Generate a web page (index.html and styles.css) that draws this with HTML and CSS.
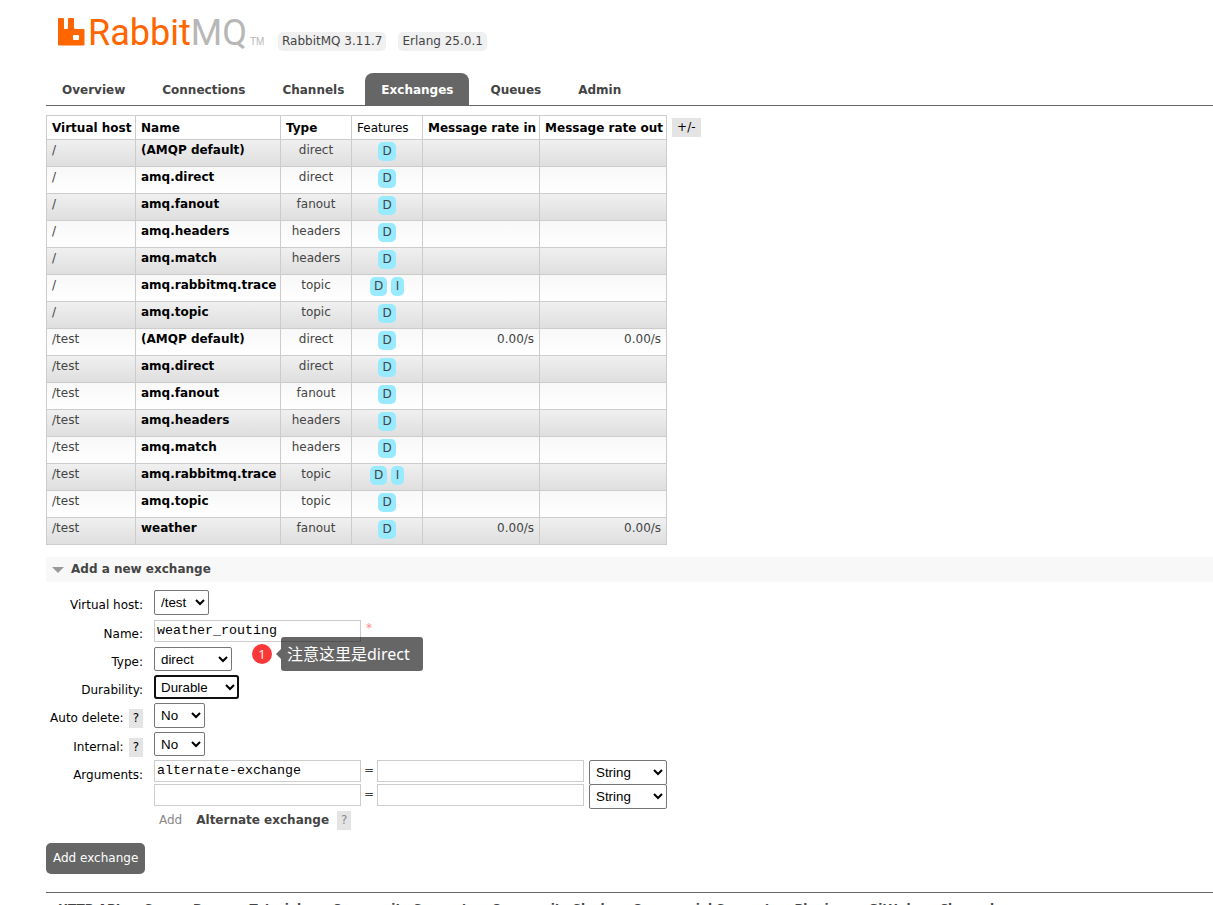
FILE: index.html
```html
<!DOCTYPE html>
<html lang="en">
<head>
<meta charset="utf-8">
<title>RabbitMQ Management</title>
<link rel="stylesheet" href="styles.css">
</head>
<body>
<header class="top">
  <a class="logo" href="#" aria-label="RabbitMQ">
    <svg class="logo-mark" viewBox="0 0 27 28" aria-hidden="true"><path fill="#f60" fill-rule="evenodd" d="M1 0h4q1 0 1 1v9q0 1 1 1h2q1 0 1-1V1q0-1 1-1H15q1 0 1 1v9q0 1 1 1h8.500q1 0 1 1v14.500q0 1-1 1H1q-1 0-1-1V1q0-1 1-1zM16 17q-1 0-1 1v3q0 1 1 1h4q1 0 1-1v-3q0-1-1-1z"/></svg>
    <span class="logo-text">Rabbit<span class="logo-mq">MQ</span></span>
    <span class="logo-tm">TM</span>
  </a>
  <span class="version">RabbitMQ 3.11.7</span>
  <span class="version">Erlang 25.0.1</span>
</header>
<nav>
  <ul class="tabs">
    <li><a href="#">Overview</a></li>
    <li><a href="#">Connections</a></li>
    <li><a href="#">Channels</a></li>
    <li><a class="selected" href="#">Exchanges</a></li>
    <li><a href="#">Queues</a></li>
    <li><a href="#">Admin</a></li>
  </ul>
</nav>
<main>
  <div class="list-area">
    <table class="list">
      <thead>
        <tr><th class="c-vhost">Virtual host</th><th class="c-name">Name</th><th class="c-type">Type</th><th class="c-feat plain">Features</th><th class="c-in">Message rate in</th><th class="c-out">Message rate out</th></tr>
      </thead>
      <tbody>
        <tr><td>/</td><td><a href="#">(AMQP default)</a></td><td class="c">direct</td><td class="c"><abbr>D</abbr></td><td class="r"></td><td class="r"></td></tr>
        <tr><td>/</td><td><a href="#">amq.direct</a></td><td class="c">direct</td><td class="c"><abbr>D</abbr></td><td class="r"></td><td class="r"></td></tr>
        <tr><td>/</td><td><a href="#">amq.fanout</a></td><td class="c">fanout</td><td class="c"><abbr>D</abbr></td><td class="r"></td><td class="r"></td></tr>
        <tr><td>/</td><td><a href="#">amq.headers</a></td><td class="c">headers</td><td class="c"><abbr>D</abbr></td><td class="r"></td><td class="r"></td></tr>
        <tr><td>/</td><td><a href="#">amq.match</a></td><td class="c">headers</td><td class="c"><abbr>D</abbr></td><td class="r"></td><td class="r"></td></tr>
        <tr><td>/</td><td><a href="#">amq.rabbitmq.trace</a></td><td class="c">topic</td><td class="c"><abbr>D</abbr> <abbr>I</abbr></td><td class="r"></td><td class="r"></td></tr>
        <tr><td>/</td><td><a href="#">amq.topic</a></td><td class="c">topic</td><td class="c"><abbr>D</abbr></td><td class="r"></td><td class="r"></td></tr>
        <tr><td>/test</td><td><a href="#">(AMQP default)</a></td><td class="c">direct</td><td class="c"><abbr>D</abbr></td><td class="r">0.00/s</td><td class="r">0.00/s</td></tr>
        <tr><td>/test</td><td><a href="#">amq.direct</a></td><td class="c">direct</td><td class="c"><abbr>D</abbr></td><td class="r"></td><td class="r"></td></tr>
        <tr><td>/test</td><td><a href="#">amq.fanout</a></td><td class="c">fanout</td><td class="c"><abbr>D</abbr></td><td class="r"></td><td class="r"></td></tr>
        <tr><td>/test</td><td><a href="#">amq.headers</a></td><td class="c">headers</td><td class="c"><abbr>D</abbr></td><td class="r"></td><td class="r"></td></tr>
        <tr><td>/test</td><td><a href="#">amq.match</a></td><td class="c">headers</td><td class="c"><abbr>D</abbr></td><td class="r"></td><td class="r"></td></tr>
        <tr><td>/test</td><td><a href="#">amq.rabbitmq.trace</a></td><td class="c">topic</td><td class="c"><abbr>D</abbr> <abbr>I</abbr></td><td class="r"></td><td class="r"></td></tr>
        <tr><td>/test</td><td><a href="#">amq.topic</a></td><td class="c">topic</td><td class="c"><abbr>D</abbr></td><td class="r"></td><td class="r"></td></tr>
        <tr><td>/test</td><td><a href="#">weather</a></td><td class="c">fanout</td><td class="c"><abbr>D</abbr></td><td class="r">0.00/s</td><td class="r">0.00/s</td></tr>
      </tbody>
    </table>
    <button class="chip columns" type="button">+/-</button>
  </div>

  <h2 class="section"><svg class="arrow" viewBox="0 0 12 6" aria-hidden="true"><path fill="#999" d="M0 0h12L6 6z"/></svg>Add a new exchange</h2>

  <form class="add">
    <div class="row tall"><div class="label"><label for="vhost">Virtual host:</label></div>
      <select id="vhost" class="w-vhost"><option>/test</option></select></div>
    <div class="row"><div class="label"><label for="name">Name:</label></div>
      <div class="field"><input id="name" type="text" value="weather_routing"><span class="mand">*</span></div></div>
    <div class="row"><div class="label"><label for="type">Type:</label></div>
      <div class="field noted"><select id="type" class="w-type"><option>direct</option></select>
        <div class="note"><span class="note-num">1</span><span class="note-text">注意这里是direct</span></div></div></div>
    <div class="row"><div class="label"><label for="durable">Durability:</label></div>
      <select id="durable" class="w-durable focused"><option>Durable</option></select></div>
    <div class="row tall"><div class="label"><label for="autodel">Auto delete:</label><button class="chip" type="button">?</button></div>
      <select id="autodel" class="w-no"><option>No</option></select></div>
    <div class="row"><div class="label"><label for="internal">Internal:</label><button class="chip" type="button">?</button></div>
      <select id="internal" class="w-no"><option>No</option></select></div>
    <div class="row"><div class="label"><label for="arg1">Arguments:</label></div>
      <div class="args">
        <div class="arg"><input id="arg1" type="text" value="alternate-exchange"><span class="eq">=</span><input type="text" aria-label="Argument value 1"><select class="w-type" aria-label="Argument type 1"><option>String</option></select></div>
        <div class="arg"><input type="text" aria-label="Argument key 2"><span class="eq">=</span><input type="text" aria-label="Argument value 2"><select class="w-type" aria-label="Argument type 2"><option>String</option></select></div>
        <div class="shortcuts"><span class="add-word">Add</span><a href="#">Alternate exchange</a><button class="chip muted" type="button">?</button></div>
      </div></div>
    <button class="submit" type="submit">Add exchange</button>
  </form>
</main>
<footer>
  <a href="#">HTTP API</a><a href="#">Server Docs</a><a href="#">Tutorials</a><a href="#">Community Support</a><a href="#">Community Slack</a><a href="#">Commercial Support</a><a href="#">Plugins</a><a href="#">GitHub</a><a href="#">Changelog</a>
</footer>
</body>
</html>
```

FILE: styles.css
```css
* { box-sizing: border-box; }
html { height: 100%; overflow: hidden; }
body {
  margin: 0;
  padding-left: 46px;
  color: #444;
  background: #fff;
  font: 12px/19px Verdana, "DejaVu Sans", sans-serif;
}
a { color: #444; font-weight: bold; text-decoration: none; }

.top { display: flex; align-items: flex-start; gap: 12px; height: 73px; padding-left: 12px; }
.logo { display: flex; width: 208px; padding-top: 18px; font-weight: normal; color: #f60; }
.logo-mark { flex: none; width: 27px; height: 28px; }
.logo-text { margin-left: 3px; font: 36px/30px Roboto, sans-serif; }
.logo-mq { color: #b7b7b7; }
.logo-tm { margin: 15px 0 0 3px; color: #b7b7b7; font: 10px/18px "Liberation Sans", sans-serif; }
.version { margin-top: 32px; padding: 0 4px; border-radius: 5px; background: #f0f0f0; }

.tabs { display: flex; gap: 5px; margin: 0; padding: 0; list-style: none; border-bottom: 1px solid #666; }
.tabs a { display: block; padding: 8px 16px 5px; border-radius: 8px 8px 0 0; }
.tabs .selected { background: #666; color: #fff; }

.list-area { display: flex; align-items: flex-start; gap: 5px; padding-top: 9px; }
.list { border-collapse: collapse; }
.list th, .list td { border: 1px solid #ccc; white-space: nowrap; text-align: left; vertical-align: top; }
.list th { padding: 3px 3px 1px 5px; color: #000; }
.list td { height: 27px; padding: 1px 3px 0 5px; }
.list td a { color: #000; }
.list .plain { font-weight: normal; }
.list .c { padding: 1px 4px 0; text-align: center; }
.list .r { padding-right: 5px; text-align: right; }
.list tbody tr:nth-child(odd) { background: linear-gradient(#f0f0f0, #dedede); }
.list tbody tr:nth-child(even) { background: linear-gradient(#f8f8f8, #fff); }
.c-vhost { width: 89px; }
.c-name { width: 145px; }
.c-type, .c-feat { width: 71px; }
.c-in { width: 117px; }
.c-out { width: 127px; }
abbr { display: inline-block; min-width: 13px; margin-top: 1px; padding: 0 4px; border-radius: 5px; background: #98ebff; }

.chip { border: 0; padding: 0 4px; background: #e4e4e4; color: #000; font: inherit; line-height: 19px; }
.chip.muted { color: #888; }
.columns { margin-top: 3px; padding: 0 5px; }

.section { display: flex; align-items: center; gap: 7px; margin: 12px 0 8px; padding: 3px 6px; background: #f8f8f8; font-size: 12px; line-height: 19px; }
.arrow { width: 12px; height: 6px; }

.add { display: flex; flex-direction: column; gap: 4px; color: #000; }
.row { display: grid; grid-template-columns: 97px 1fr; column-gap: 11px; min-height: 24px; }
.tall { min-height: 25px; }
.label { display: flex; justify-content: flex-end; align-items: flex-start; gap: 5px; padding-top: 6px; height: 24px; white-space: nowrap; }
.field { display: flex; align-items: flex-start; color: #444; }
input { width: 207px; height: 22px; margin-top: 1px; padding: 1px 2px 3px; border: 1px solid #ccc; background: #fff; color: #000; font-family: "Courier New", "Liberation Mono", monospace; }
select { height: 24px; padding: 0 2px; border: 1px solid #767676; border-radius: 2px; background-color: #fff; color: #000; font-family: Arial, "Liberation Sans", sans-serif; }
.tall select { height: 25px; }
.w-vhost { width: 55px; }
.w-type { width: 78px; }
.w-durable { width: 85px; }
.w-no { width: 51px; }
.focused { outline: 2px solid #101010; outline-offset: -2px; border-radius: 3px; }
.mand { padding-left: 5px; color: #f88; }

.noted { position: relative; }
.note { position: absolute; left: 98px; top: -10px; display: flex; align-items: center; gap: 9px; white-space: nowrap; }
.note-num { width: 20px; height: 20px; border-radius: 50%; background: #fa3838; color: #fff; font: 13px/20px "Open Sans", sans-serif; text-align: center; }
.note-text { position: relative; padding: 0 13px 0 6px; border-radius: 3px; background: rgba(0, 0, 0, .6); color: #fff; font: 16px/34px "Noto Sans", "Noto Sans CJK SC", sans-serif; }
.note-text::before { content: ""; position: absolute; left: -5px; top: 12px; border: 5px solid transparent; border-left: 0; border-right-color: rgba(0, 0, 0, .6); }

.arg { display: flex; align-items: flex-start; height: 24px; }
.arg input { margin-top: 0; }
.arg select { height: 25px; margin-left: 5px; }
.eq { width: 16px; color: #444; line-height: 21px; text-align: center; }
.shortcuts { display: flex; align-items: flex-start; padding: 3px 0 0 5px; }
.shortcuts a { margin: 0 8px 0 14px; }
.add-word { color: #888; }
.submit { align-self: flex-start; margin-top: 9px; padding: 6px 7px; border: 0; border-radius: 5px; background: #666; color: #fff; font: inherit; }

footer { display: flex; gap: 24px; margin-top: 18px; padding: 7px 12px; border-top: 1px solid #666; white-space: nowrap; }
```
